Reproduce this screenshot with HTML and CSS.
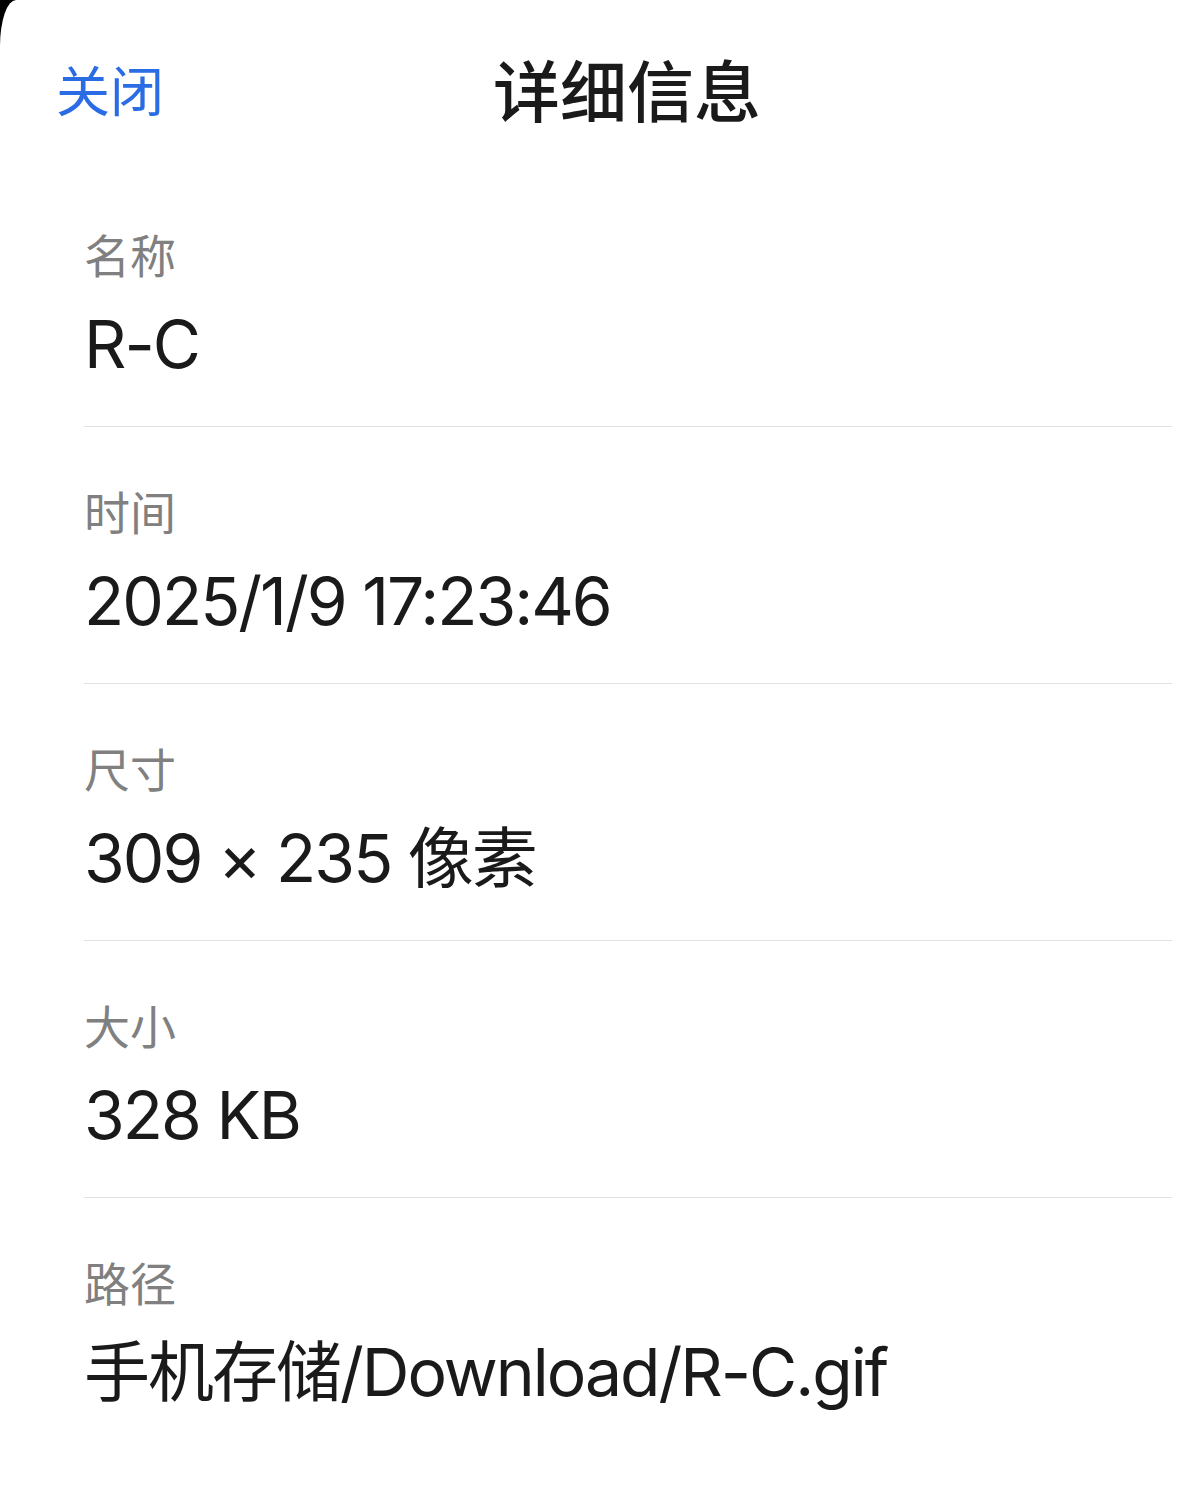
FILE: index.html
```html
<!DOCTYPE html>
<html lang="zh-CN">
<head>
    <meta charset="UTF-8">
    <meta name="viewport" content="width=device-width, initial-scale=1.0">
    <title>详细信息</title>
    <link rel="stylesheet" href="styles.css">
</head>
<body>
    <div class="sheet">
        <div class="header">
            <span class="close-btn">关闭</span>
            <h1 class="title">详细信息</h1>
        </div>

        <div class="info-list">
            <div class="info-item">
                <div class="info-label">名称</div>
                <div class="info-value">R-C</div>
            </div>
            <div class="info-item">
                <div class="info-label">时间</div>
                <div class="info-value">2025/1/9 17:23:46</div>
            </div>
            <div class="info-item">
                <div class="info-label">尺寸</div>
                <div class="info-value">309 × 235 像素</div>
            </div>
            <div class="info-item">
                <div class="info-label">大小</div>
                <div class="info-value">328 KB</div>
            </div>
            <div class="info-item last">
                <div class="info-label">路径</div>
                <div class="info-value">手机存储/Download/R-C.gif</div>
            </div>
        </div>
    </div>
</body>
</html>
```

FILE: styles.css
```css
body {
    margin: 0;
    padding: 0;
    background-color: #000000;
    font-family: "Inter", "Noto Sans CJK SC", sans-serif;
}

.sheet {
    background-color: #ffffff;
    min-height: 1506px;
    border-top-left-radius: 16px 46px;
}

/* Header bar */
.header {
    display: flex;
    align-items: center;
    padding: 53px 0 0 56px;
    height: 80px;
    gap: 329px;
}

.close-btn {
    color: #2a6ce4;
    font-size: 54px;
    line-height: 80px;
}

.title {
    margin: 0;
    color: #1a1a1a;
    font-size: 67px;
    font-weight: 500;
    line-height: 80px;
}

/* Detail rows */
.info-list {
    margin-top: 37px;
    padding: 0 24px 0 84px;
}

.info-item {
    padding: 58px 0 42px;
    border-bottom: 1px solid #e2e2e2;
}

.info-item.last {
    border-bottom: none;
}

.info-label {
    color: #808080;
    font-size: 46px;
    line-height: 56px;
}

.info-value {
    margin-top: 20px;
    color: #1a1a1a;
    font-size: 66px;
    line-height: 80px;
    letter-spacing: -2px;
}
```
